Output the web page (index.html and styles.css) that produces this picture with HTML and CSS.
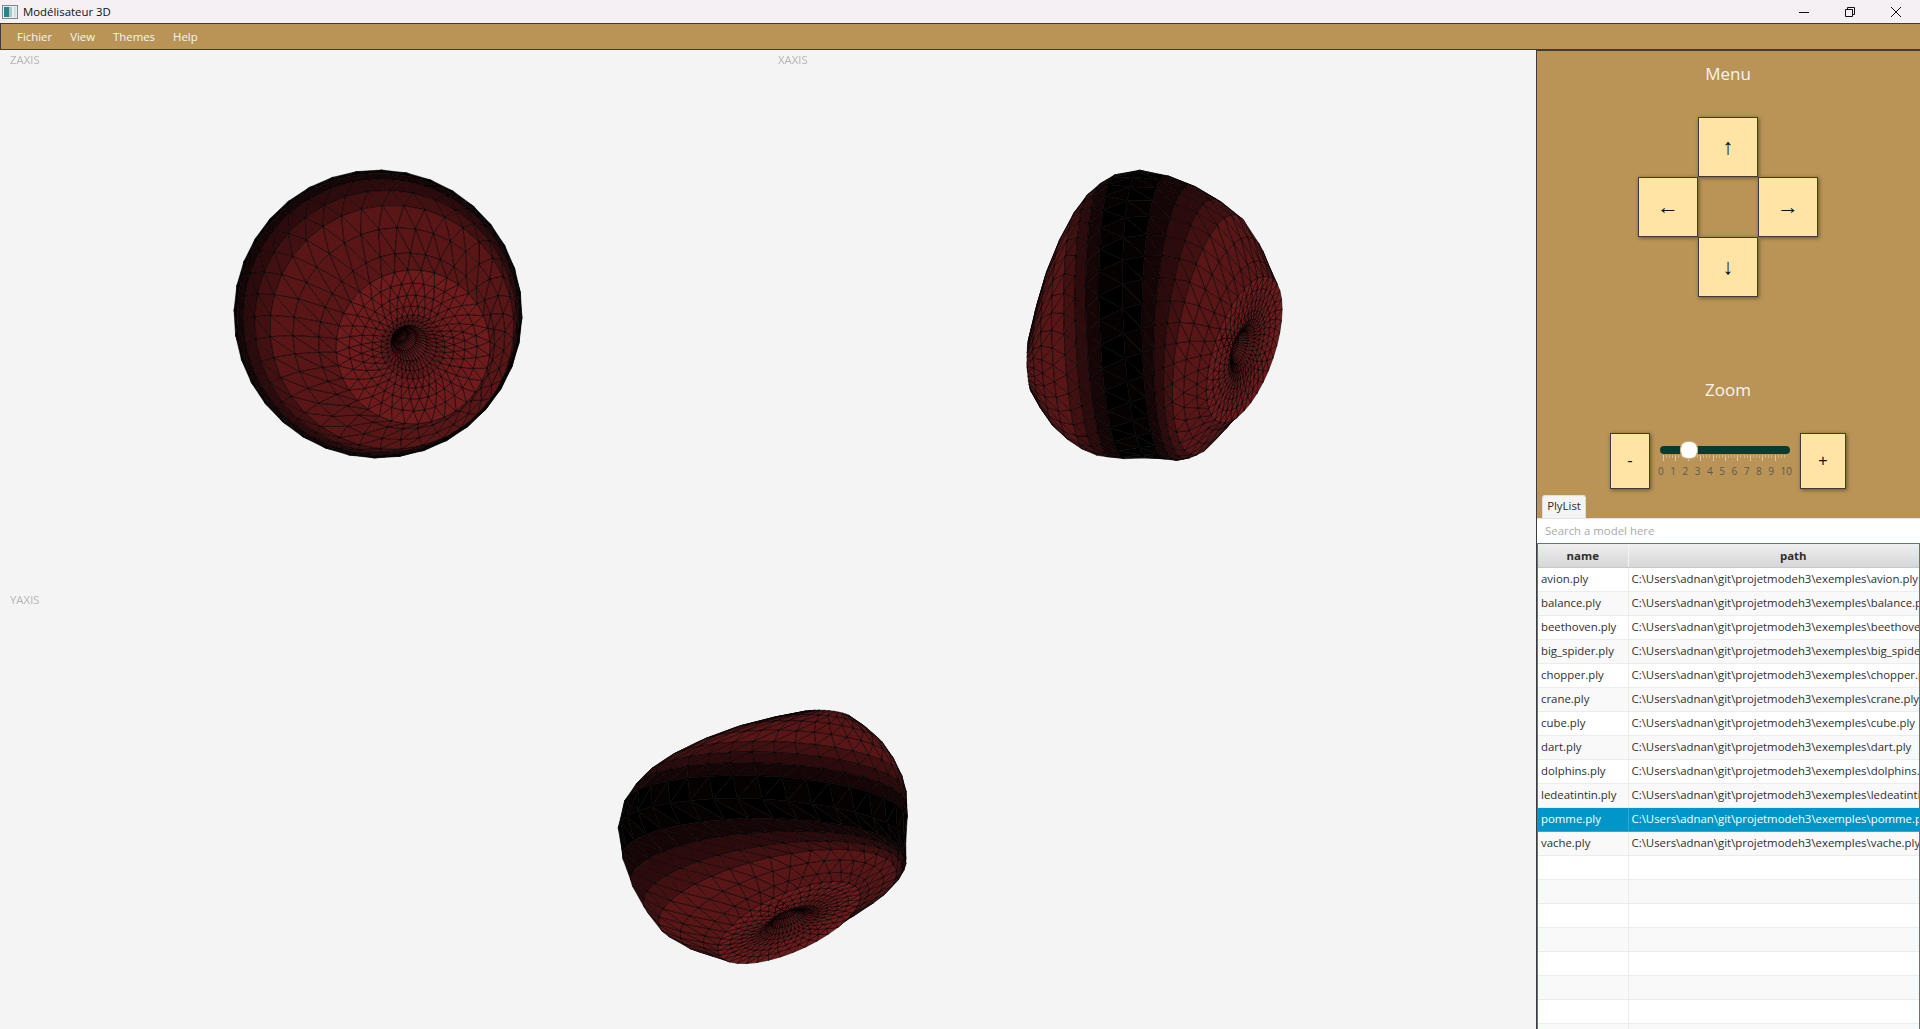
FILE: index.html
```html
<!DOCTYPE html>
<html lang="fr">

<head>
    <meta charset="UTF-8">
    <title>Modélisateur 3D</title>
    <link rel="stylesheet" href="styles.css">
</head>

<body>
    <!-- Window title bar -->
    <div class="titlebar">
        <svg class="app-icon" width="16" height="16" viewBox="0 0 16 16">
            <rect x="0.5" y="1.5" width="15" height="13" fill="#e8eeee" stroke="#7c8a8e"/>
            <rect x="2" y="3" width="5" height="10" fill="#2f7f8f"/>
            <rect x="7" y="3" width="3" height="10" fill="#a9c9c4"/>
            <rect x="12" y="3" width="2" height="10" fill="#d5dde0"/>
        </svg>
        <span class="title">Modélisateur 3D</span>
        <div class="window-buttons">
            <svg width="12" height="12" viewBox="0 0 12 12"><path d="M1 6.5H11" stroke="#111" fill="none"/></svg>
            <svg width="12" height="12" viewBox="0 0 12 12"><path d="M1.5 3.5H8.5V10.5H1.5ZM3.5 3.5V1.5H10.5V8.5H8.5" stroke="#111" fill="none"/></svg>
            <svg width="12" height="12" viewBox="0 0 12 12"><path d="M1 1L11 11M11 1L1 11" stroke="#111" fill="none"/></svg>
        </div>
    </div>

    <!-- Menu bar -->
    <nav class="menubar">
        <span>Fichier</span>
        <span>View</span>
        <span>Themes</span>
        <span>Help</span>
    </nav>

    <main class="workspace">
        <!-- 3D views -->
        <section class="views">
            <div class="view"><span class="axis-label">ZAXIS</span><canvas data-view="z"></canvas></div>
            <div class="view"><span class="axis-label">XAXIS</span><canvas data-view="x"></canvas></div>
            <div class="view view-wide"><span class="axis-label">YAXIS</span><canvas data-view="y"></canvas></div>
        </section>

        <!-- Side panel -->
        <aside class="side">
            <div class="controls">
                <h2>Menu</h2>
                <div class="pad">
                    <button class="key arrow key-up">↑</button>
                    <button class="key arrow key-left">←</button>
                    <button class="key arrow key-right">→</button>
                    <button class="key arrow key-down">↓</button>
                </div>
                <h2 class="zoom-title">Zoom</h2>
                <div class="zoom-row">
                    <button class="key key-minus">-</button>
                    <div class="slider">
                        <div class="track"><div class="thumb"></div></div>
                        <div class="ticks"></div>
                        <div class="tick-labels">
                            <span>0</span><span>1</span><span>2</span><span>3</span><span>4</span><span>5</span><span>6</span><span>7</span><span>8</span><span>9</span><span>10</span>
                        </div>
                    </div>
                    <button class="key key-plus">+</button>
                </div>
                <div class="tab">PlyList</div>
            </div>

            <input class="search" type="text" placeholder="Search a model here">

            <div class="table-wrap">
                <table class="models">
                    <thead>
                        <tr><th class="col-name">name</th><th>path</th></tr>
                    </thead>
                    <tbody>
                        <tr><td>avion.ply</td><td>C:\Users\adnan\git\projetmodeh3\exemples\avion.ply</td></tr>
                        <tr><td>balance.ply</td><td>C:\Users\adnan\git\projetmodeh3\exemples\balance.ply</td></tr>
                        <tr><td>beethoven.ply</td><td>C:\Users\adnan\git\projetmodeh3\exemples\beethoven.ply</td></tr>
                        <tr><td>big_spider.ply</td><td>C:\Users\adnan\git\projetmodeh3\exemples\big_spider.ply</td></tr>
                        <tr><td>chopper.ply</td><td>C:\Users\adnan\git\projetmodeh3\exemples\chopper.ply</td></tr>
                        <tr><td>crane.ply</td><td>C:\Users\adnan\git\projetmodeh3\exemples\crane.ply</td></tr>
                        <tr><td>cube.ply</td><td>C:\Users\adnan\git\projetmodeh3\exemples\cube.ply</td></tr>
                        <tr><td>dart.ply</td><td>C:\Users\adnan\git\projetmodeh3\exemples\dart.ply</td></tr>
                        <tr><td>dolphins.ply</td><td>C:\Users\adnan\git\projetmodeh3\exemples\dolphins.ply</td></tr>
                        <tr><td>ledeatintin.ply</td><td>C:\Users\adnan\git\projetmodeh3\exemples\ledeatintin.ply</td></tr>
                        <tr class="selected"><td>pomme.ply</td><td>C:\Users\adnan\git\projetmodeh3\exemples\pomme.ply</td></tr>
                        <tr><td>vache.ply</td><td>C:\Users\adnan\git\projetmodeh3\exemples\vache.ply</td></tr>
                        <tr><td></td><td></td></tr>
                        <tr><td></td><td></td></tr>
                        <tr><td></td><td></td></tr>
                        <tr><td></td><td></td></tr>
                        <tr><td></td><td></td></tr>
                        <tr><td></td><td></td></tr>
                        <tr><td></td><td></td></tr>
                        <tr><td></td><td></td></tr>
                    </tbody>
                </table>
            </div>
        </aside>
    </main>

    <script src="app.js"></script>
</body>

</html>
```

FILE: styles.css
```css
:root {
    --color-tan: #b99456;
    --color-key: #ffe4a6;
    --color-line: #3c3c3c;
    --color-view: #f4f4f4;
    --color-select: #0096c9;
}

* {
    box-sizing: border-box;
    margin: 0;
    padding: 0;
}

html,
body {
    height: 100%;
    overflow: hidden;
}

body {
    display: flex;
    flex-direction: column;
    background-color: var(--color-view);
    color: #2e2e2e;
    font-family: "Open Sans", "Noto Sans", sans-serif;
    font-size: 11.4px;
}

/* Title bar */
.titlebar {
    display: flex;
    align-items: center;
    height: 23px;
    padding-left: 2px;
    background-color: #f4f0f3;
    color: #111111;
}

.app-icon {
    margin-right: 5px;
}

.window-buttons {
    display: flex;
    gap: 34px;
    margin-left: auto;
    padding-right: 18px;
}

/* Menu bar */
.menubar {
    display: flex;
    align-items: center;
    gap: 18px;
    height: 27px;
    padding-left: 16px;
    background-color: var(--color-tan);
    border: 1px solid var(--color-line);
    border-right: 0;
    color: #f4f4f4;
}

/* Views */
.workspace {
    display: flex;
    flex: 1;
    min-height: 0;
}

.views {
    display: grid;
    flex: 1;
    grid-template-columns: 768px 768px;
    grid-template-rows: 540px 1fr;
    min-width: 0;
}

.view {
    position: relative;
    overflow: hidden;
}

.view-wide {
    grid-column: 1 / 3;
}

.view canvas {
    display: block;
    width: 100%;
    height: 100%;
}

.axis-label {
    position: absolute;
    top: 2px;
    left: 10px;
    color: #b4b4b4;
}

/* Side panel */
.side {
    display: flex;
    flex-direction: column;
    width: 384px;
    background-color: #ffffff;
    border-left: 1px solid var(--color-line);
    border-top: 1px solid var(--color-line);
}

.controls {
    display: flex;
    flex-direction: column;
    align-items: center;
    height: 467px;
    padding-right: 1px;
    background-color: var(--color-tan);
}

.controls h2 {
    margin-top: 11px;
    color: #f4f4f4;
    font-size: 17px;
    font-weight: 400;
    line-height: 24px;
}

.controls .zoom-title {
    margin-top: 81px;
}

.pad {
    display: grid;
    grid-template-columns: repeat(3, 60px);
    grid-template-rows: repeat(3, 60px);
    margin-top: 31px;
}

.key {
    display: flex;
    align-items: center;
    justify-content: center;
    background-color: var(--color-key);
    border: 1px solid var(--color-line);
    box-shadow: 1px 1px 4px rgba(0, 0, 0, 0.45);
    color: #111111;
    font-family: "Liberation Sans", sans-serif;
    font-size: 16px;
}

.arrow {
    font-size: 22px;
}

.key-up { grid-area: 1 / 2; }
.key-left { grid-area: 2 / 1; }
.key-right { grid-area: 2 / 3; }
.key-down { grid-area: 3 / 2; }

.zoom-row {
    display: flex;
    align-items: flex-start;
    margin-top: 31px;
}

.key-minus {
    width: 40px;
    height: 56px;
}

.key-plus {
    width: 46px;
    height: 56px;
}

.slider {
    width: 150px;
    padding: 13px 10px 0;
}

.track {
    position: relative;
    height: 8px;
    background-color: #0c3b2e;
    border-radius: 4px;
}

.thumb {
    position: absolute;
    top: -4px;
    left: 21px;
    width: 16px;
    height: 16px;
    background-color: #ffffff;
    border-radius: 6px;
    outline: 1px solid #c9ae7e;
}

.ticks {
    height: 6px;
    margin: 1px 3px 0;
    background-image:
        repeating-linear-gradient(to right, #d8c8a6 0 1px, transparent 1px 12.4px),
        repeating-linear-gradient(to right, #cdb68a 0 1px, transparent 1px 3.1px);
    background-size: 100% 100%, 100% 3px;
    background-repeat: no-repeat;
}

.tick-labels {
    display: flex;
    justify-content: space-between;
    margin: 2px -2px 0;
    color: #5c5a52;
    font-size: 10px;
    line-height: 16px;
}

.tab {
    align-self: flex-start;
    width: 44px;
    height: 23px;
    margin-top: 6px;
    margin-left: 5px;
    background-color: #f4f4f4;
    border: 1px solid #dddddd;
    border-bottom: 0;
    border-radius: 3px 3px 0 0;
    line-height: 20px;
    text-align: center;
}

.search {
    flex: none;
    height: 25px;
    padding: 0 0 2px 8px;
    background-color: #ffffff;
    border: 0;
    border-top: 1px solid #e4e4e4;
    color: #2e2e2e;
    font-family: inherit;
    font-size: 11.4px;
}

.search::placeholder {
    color: #aaaaaa;
}

/* Model table */
.table-wrap {
    flex: 1;
    min-height: 0;
    overflow: hidden;
    border: 1px solid var(--color-select);
    border-bottom: 0;
}

.models {
    width: 421px;
    border-collapse: collapse;
    table-layout: fixed;
    background-color: #ffffff;
}

.models th {
    height: 23px;
    background-image: linear-gradient(#efefef, #d6d6d6);
    border-right: 1px solid #f4f4f4;
    border-bottom: 1px solid #c8c8c8;
    font-size: 11.4px;
    font-weight: 700;
}

.col-name {
    width: 90px;
}

.models td {
    height: 24px;
    padding: 0 0 1px 3px;
    overflow: hidden;
    border-right: 1px solid #ececec;
    border-bottom: 1px solid #ececec;
    white-space: nowrap;
}

.models tr:nth-child(even) td {
    background-color: #f9f9f9;
}

.models tr.selected td {
    background-color: var(--color-select);
    border-color: #32a9d4;
    color: #ffffff;
}
```

FILE: app.js
```js
// Apple model drawn in three views, as a surface of revolution

// [radius, height] from the bottom pole up to the dimple
const PROFILE = [
    [0, -118], [28, -114], [54, -104], [80, -92], [102, -78], [120, -63], [131, -50], [137, -38], [142, -24],
    [144, 0], [142, 20], [138, 34], [131, 46], [122, 56], [106, 64], [88, 71], [77, 76],
    [64, 76], [52, 76], [41, 76], [32, 76], [25, 75], [18, 73], [12, 69], [7, 65], [3, 61], [0, 59]
];
const SEGMENTS = 36;
const LEVELS = 5;
const TWIST = 0.35; // of one segment, per ring

// centre is local to the canvas; top and back are how far each end of the model leans,
// ease is how late the top end starts leaning
const VIEWS = {
    z: { center: [378, 264], axis: [0, 0, 1], capAxis: [0.03, 0.03, 1], top: [35, 33], back: [0, 0], ease: 3 },
    x: { center: [375, 264], axis: [0.99, -0.03, 0.14], capAxis: [0.87, 0.3, 0.39], top: [26, 38], back: [1, 50], ease: 1.7 },
    y: { center: [762, 245], axis: [-0.05, 0.97, 0.25], capAxis: [0.38, 0.85, 0.38], top: [31, 14], back: [60, -8], ease: 1.7 }
};

function normalize(v) {
    const len = Math.hypot(v[0], v[1], v[2]);
    return [v[0] / len, v[1] / len, v[2] / len];
}

function cross(a, b) {
    return [a[1] * b[2] - a[2] * b[1], a[2] * b[0] - a[0] * b[2], a[0] * b[1] - a[1] * b[0]];
}

function mix(a, b, k) {
    return [a[0] + (b[0] - a[0]) * k, a[1] + (b[1] - a[1]) * k, a[2] + (b[2] - a[2]) * k];
}

function projectAll(view) {
    const body = normalize(view.axis);
    return PROFILE.map(([r, z], i) => {
        const up = Math.pow(Math.min(1, Math.max(0, z) / 76), view.ease);
        const down = Math.max(0, -z) / 118;
        const a = normalize(mix(view.axis, view.capAxis, up));
        const e1 = normalize(cross([0, 1, 0.01], a));
        const e2 = cross(a, e1);
        const sx = view.top[0] * up + view.back[0] * down * down;
        const sy = view.top[1] * up + view.back[1] * down * down;
        const ring = [];
        for (let j = 0; j < SEGMENTS; j++) {
            const t = ((j + i * TWIST) / SEGMENTS) * Math.PI * 2;
            const c = r * Math.cos(t);
            const s = r * Math.sin(t);
            ring.push([
                view.center[0] + e1[0] * c + e2[0] * s + body[0] * z + sx,
                view.center[1] + e1[1] * c + e2[1] * s + body[1] * z + sy,
                e1[2] * c + e2[2] * s + body[2] * z
            ]);
        }
        return ring;
    });
}

function shadeFor(i, j) {
    const dr = PROFILE[i][0] - PROFILE[i + 1][0];
    const dz = PROFILE[i][1] - PROFILE[i + 1][1];
    const light = Math.abs(dr) / Math.hypot(dr, dz);
    let k = Math.floor(light * LEVELS + 0.3) / LEVELS;
    // walls of the dimple stay lit, only the very middle goes dark
    const rim = PROFILE[i][0];
    if (PROFILE[i][1] > 60 && rim <= 32 && rim > 4) k = 0.9;
    // the darkest band is patchy, not flat black
    if (k === 0) k = (i + j) % 2 ? 0.01 : 0.06;
    return `rgb(${Math.round(112 * k)},${Math.round(26 * k)},${Math.round(28 * k)})`;
}

function facing(p, q, r) {
    return (q[0] - p[0]) * (r[1] - p[1]) - (q[1] - p[1]) * (r[0] - p[0]) > 0;
}

function drawView(canvas) {
    canvas.width = canvas.clientWidth;
    canvas.height = canvas.clientHeight;
    const ctx = canvas.getContext("2d");
    const rings = projectAll(VIEWS[canvas.dataset.view]);
    const faces = [];

    for (let i = 0; i < rings.length - 1; i++) {
        for (let j = 0; j < SEGMENTS; j++) {
            const color = shadeFor(i, j);
            const next = (j + 1) % SEGMENTS;
            const tris = [
                [rings[i][j], rings[i][next], rings[i + 1][j]],
                [rings[i][next], rings[i + 1][next], rings[i + 1][j]]
            ];
            tris.forEach((tri) => {
                if (facing(tri[0], tri[1], tri[2])) {
                    faces.push({ tri, color, depth: (tri[0][2] + tri[1][2] + tri[2][2]) / 3 });
                }
            });
        }
    }

    faces.sort((p, q) => p.depth - q.depth);
    ctx.lineWidth = 0.8;
    ctx.strokeStyle = "rgba(0,0,0,0.72)";
    faces.forEach((face) => {
        ctx.beginPath();
        ctx.moveTo(face.tri[0][0], face.tri[0][1]);
        ctx.lineTo(face.tri[1][0], face.tri[1][1]);
        ctx.lineTo(face.tri[2][0], face.tri[2][1]);
        ctx.closePath();
        ctx.fillStyle = face.color;
        ctx.fill();
        ctx.stroke();
    });
}

document.querySelectorAll(".view canvas").forEach(drawView);
```
